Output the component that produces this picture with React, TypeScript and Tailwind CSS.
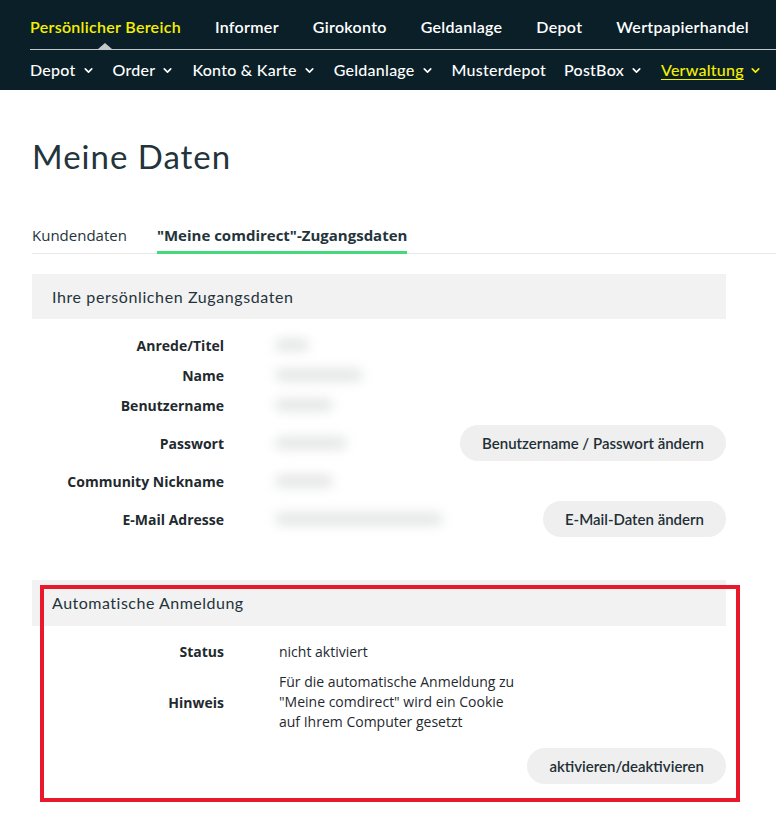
import React from 'react'
import { ChevronDown } from 'lucide-react'

const topNav = ['Persönlicher Bereich', 'Informer', 'Girokonto', 'Geldanlage', 'Depot', 'Wertpapierhandel']

const subNav = [
  { label: 'Depot', menu: true },
  { label: 'Order', menu: true },
  { label: 'Konto & Karte', menu: true },
  { label: 'Geldanlage', menu: true },
  { label: 'Musterdepot', menu: false },
  { label: 'PostBox', menu: true },
]

const rows = [
  { label: 'Anrede/Titel', blur: 34, h: 'h-[30px]' },
  { label: 'Name', blur: 88, h: 'h-[30px]' },
  { label: 'Benutzername', blur: 58, h: 'h-[30px]' },
  { label: 'Passwort', blur: 72, h: 'h-[46px]', button: 'Benutzername / Passwort ändern' },
  { label: 'Community Nickname', blur: 58, h: 'h-[30px]' },
  { label: 'E-Mail Adresse', blur: 168, h: 'h-[46px]', button: 'E-Mail-Daten ändern' },
]

const geo = { fontFamily: 'Lato, "Noto Sans", sans-serif' }
const body = { fontFamily: '"Open Sans", "Noto Sans", sans-serif' }

function PillButton({ children }: { children: React.ReactNode }) {
  return (
    <button
      style={geo}
      className="h-9 rounded-full bg-[#efefef] px-[22px] text-[15px] font-semibold text-[#1f2f36]"
    >
      {children}
    </button>
  )
}

export default function App() {
  return (
    <div className="min-h-[834px] w-[776px] overflow-hidden bg-white">
      <header style={geo} className="h-[90px] bg-[#0b1f28] pl-[30px] text-white">
        <nav className="relative flex h-[49px] items-center gap-[34px] pt-[5px] text-[16px] font-semibold tracking-[0.3px]">
          {topNav.map((item, i) => (
            <span key={item} className={i === 0 ? 'text-[#f5f000]' : ''}>
              {item}
            </span>
          ))}
          <span className="absolute bottom-0 left-[68px] h-0 w-0 border-x-[7px] border-b-[6px] border-x-transparent border-b-[#c3c7c9]" />
        </nav>
        <div className="h-px bg-[#c3c7c9]" />
        <nav className="flex h-[40px] items-center gap-[18px] text-[16px] font-medium tracking-[0.25px]">
          {subNav.map((s) => (
            <span key={s.label} className="flex items-center gap-[6px]">
              {s.label}
              {s.menu && <ChevronDown size={13} strokeWidth={3} />}
            </span>
          ))}
          <span className="flex items-center gap-[5px] text-[#f5f000]">
            <span className="underline underline-offset-[3px]">Verwaltung</span>
            <ChevronDown size={13} strokeWidth={3} />
          </span>
        </nav>
      </header>

      <main className="pl-[32px]">
        <h1 style={geo} className="mt-[42px] text-[33px] font-normal tracking-[1px] text-[#24343b]">
          Meine Daten
        </h1>

        <div style={body} className="mt-[42px] flex gap-[30px] border-b border-[#e8e8e8] text-[15px] text-[#24343b]">
          <span className="pb-[7px]">Kundendaten</span>
          <span className="-mb-px border-b-[3px] border-[#44d97a] pb-[5px] font-bold">"Meine comdirect"-Zugangsdaten</span>
        </div>

        <section className="mt-[20px] w-[694px]">
          <div style={geo} className="flex h-[45px] items-center bg-[#f2f2f2] pl-[20px] text-[16px] tracking-[0.6px] text-[#24343b]">
            Ihre persönlichen Zugangsdaten
          </div>
          <div style={body} className="pt-[11px] text-[14px] text-[#1f2a2f]">
            {rows.map((r) => (
              <div key={r.label} className={`flex items-center ${r.h}`}>
                <span className="w-[192px] text-right font-bold">{r.label}</span>
                <span className="ml-[51px] h-[12px] rounded-full bg-[#e3e4e5] blur-[6px]" style={{ width: r.blur }} />
                {r.button && (
                  <span className="ml-auto">
                    <PillButton>{r.button}</PillButton>
                  </span>
                )}
              </div>
            ))}
          </div>
        </section>

        <section className="relative mt-[38px] w-[694px]">
          <div style={geo} className="flex h-[46px] items-center bg-[#f2f2f2] pl-[20px] text-[16px] tracking-[0.5px] text-[#24343b]">
            Automatische Anmeldung
          </div>
          <div style={body} className="pt-[12px] text-[14px] text-[#1f2a2f]">
            <div className="flex h-[26px] items-center">
              <span className="w-[192px] text-right font-bold">Status</span>
              <span className="ml-[55px]">nicht aktiviert</span>
            </div>
            <div className="mt-[8px] flex items-center">
              <span className="w-[192px] text-right font-bold">Hinweis</span>
              <span className="ml-[55px] leading-[20px]">
                Für die automatische Anmeldung zu
                <br />
                "Meine comdirect" wird ein Cookie
                <br />
                auf Ihrem Computer gesetzt
              </span>
            </div>
            <div className="mt-[16px] flex justify-end">
              <PillButton>aktivieren/deaktivieren</PillButton>
            </div>
          </div>
          <div className="pointer-events-none absolute left-[8px] top-[5px] h-[217px] w-[700px] border-4 border-[#e8192c]" />
        </section>
      </main>
    </div>
  )
}
